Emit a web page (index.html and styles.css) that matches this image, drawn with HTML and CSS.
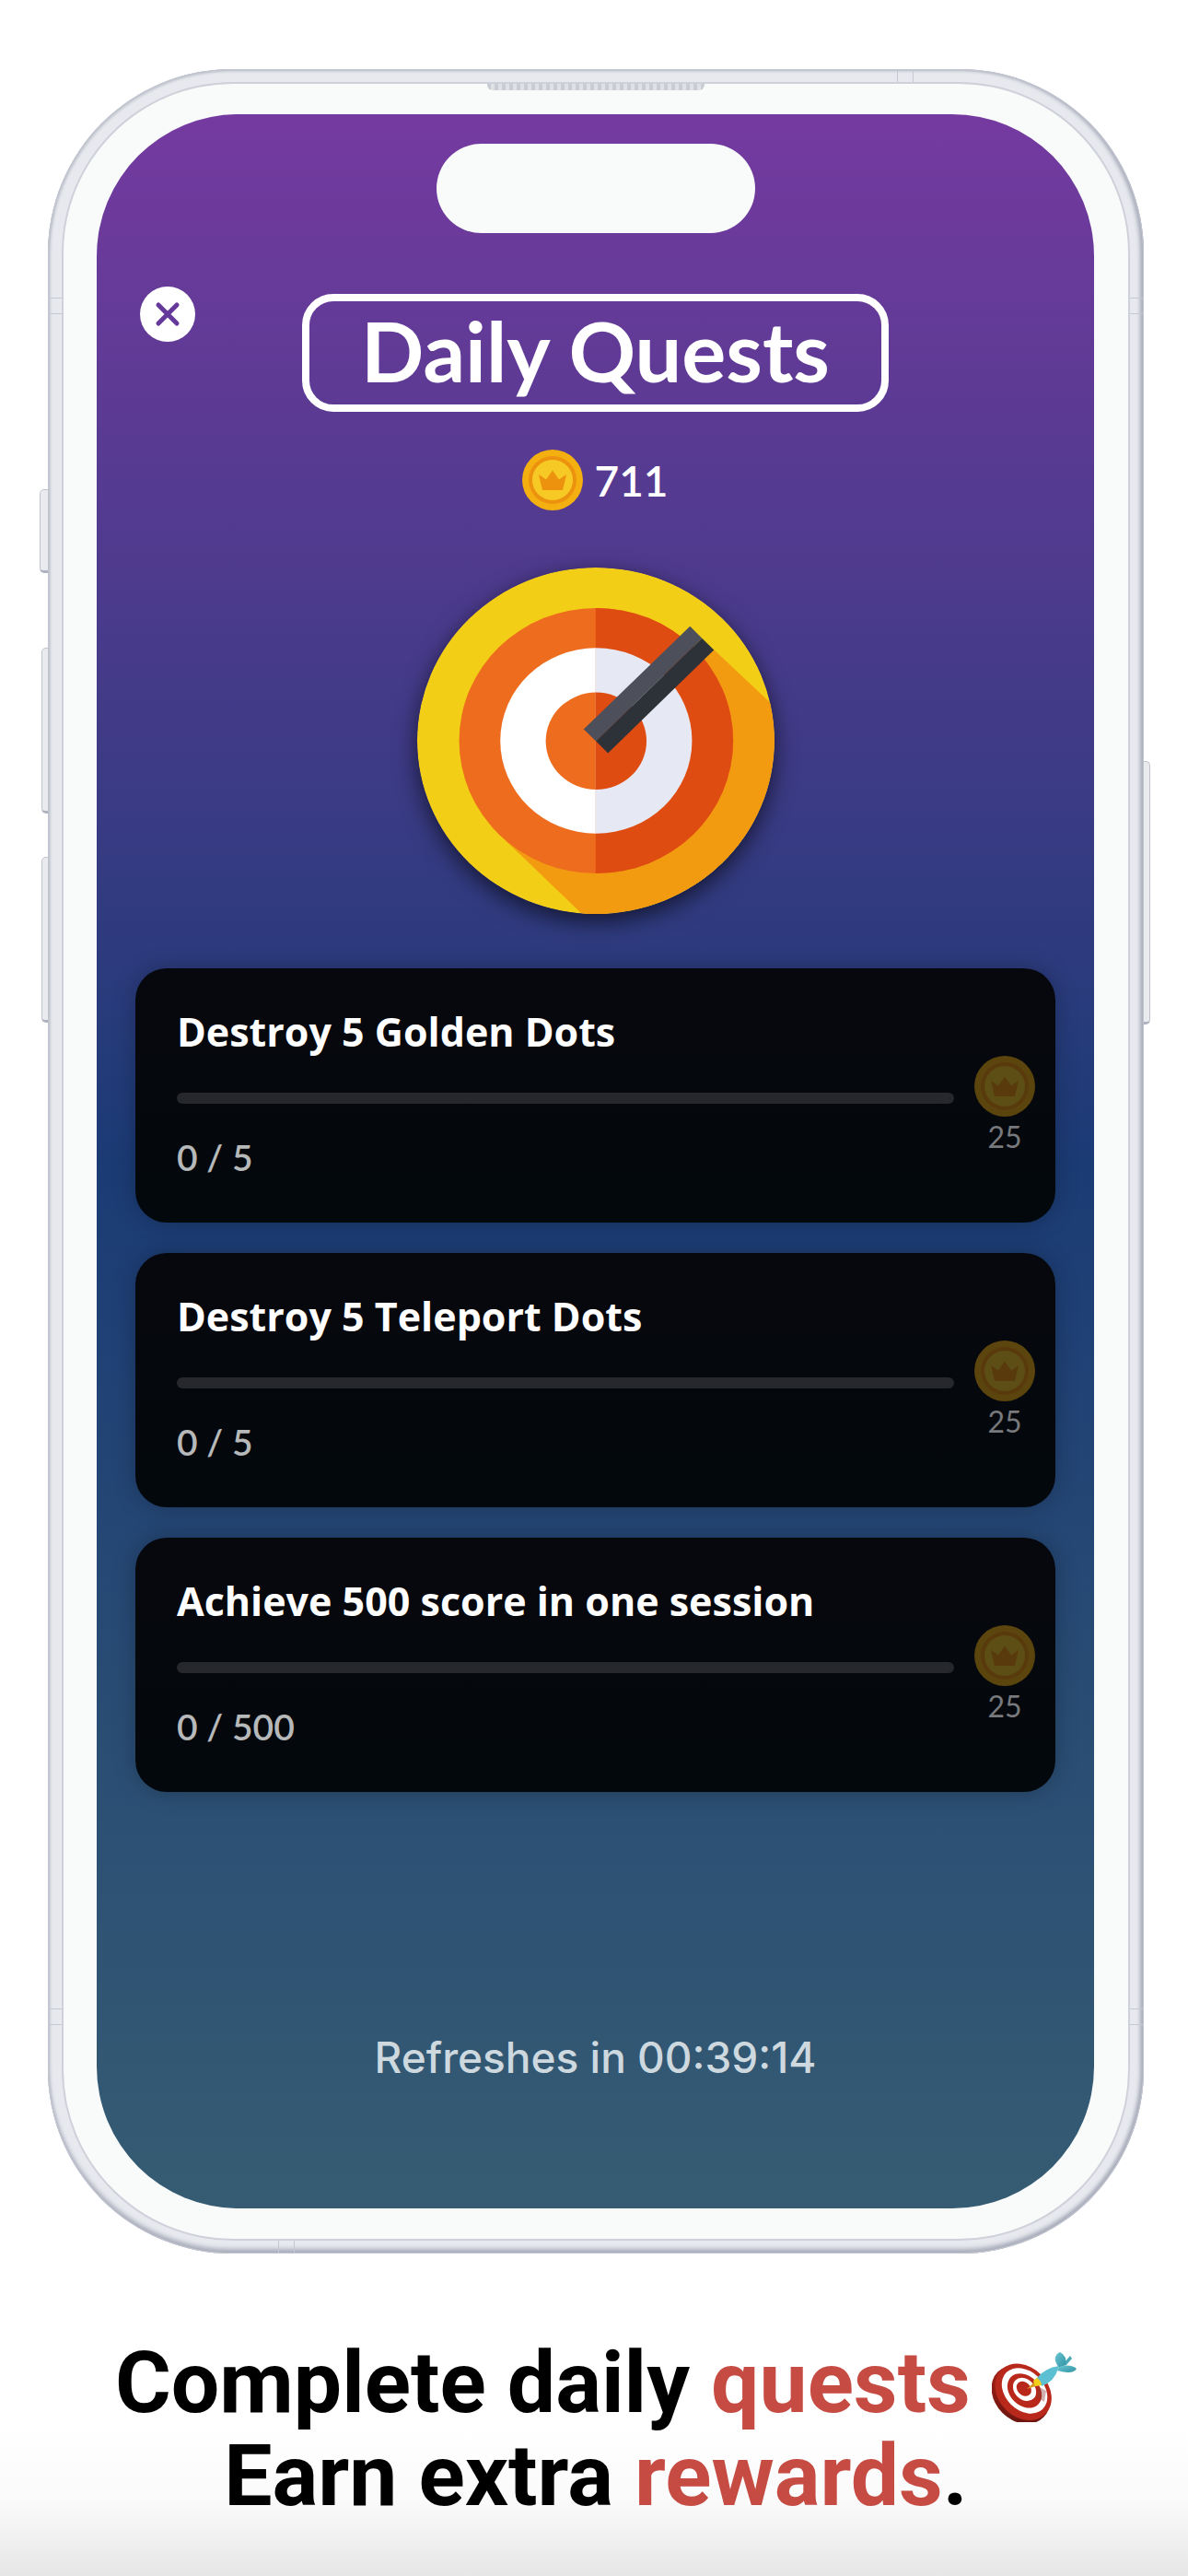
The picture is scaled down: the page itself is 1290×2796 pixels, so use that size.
FILE: index.html
```html
<!DOCTYPE html>
<html lang="en">
<head>
<meta charset="utf-8">
<meta name="viewport" content="width=device-width, initial-scale=1">
<title>Daily Quests</title>
<link rel="stylesheet" href="styles.css">
</head>
<body>
<svg width="0" height="0" class="defs" aria-hidden="true">
  <symbol id="coin" viewBox="0 0 66 66">
    <circle cx="33" cy="33" r="33" fill="#f4b010"/>
    <circle cx="33" cy="33" r="26" fill="#ec920f"/>
    <circle cx="33" cy="33" r="22" fill="#f6c924"/>
    <path d="M18 27l8 5.500 7-10 7 10 8-5.500-4 17H22z" fill="#ec920f"/>
  </symbol>
</svg>
<main class="page">
  <section class="phone">
    <span class="key key-action"></span>
    <span class="key key-up"></span>
    <span class="key key-down"></span>
    <span class="key key-power"></span>
    <span class="band band-top"></span>
    <span class="band band-bottom"></span>
    <span class="band band-left"></span>
    <span class="band band-right"></span>
    <span class="band band-left band-low"></span>
    <span class="band band-right band-low"></span>
    <div class="bezel">
      <span class="speaker"></span>
      <div class="screen">
        <div class="island"></div>
        <header class="header">
          <button class="close" type="button" aria-label="Close">
            <svg viewBox="0 0 60 60"><path d="M20 20l20 20M40 20L20 40"/></svg>
          </button>
          <h1 class="title">Daily Quests</h1>
        </header>
        <div class="balance">
          <svg class="coin"><use href="#coin"/></svg>
          <span>711</span>
        </div>
        <svg class="target" viewBox="160 108 1163 1127" aria-hidden="true">
          <defs>
            <clipPath id="disc"><ellipse cx="741.500" cy="671.500" rx="581.500" ry="563.500"/></clipPath>
            <clipPath id="right"><path d="M741 100h600v1150H741z"/></clipPath>
          </defs>
          <ellipse cx="741.500" cy="671.500" rx="581.500" ry="563.500" fill="#f3ce16"/>
          <path clip-path="url(#disc)" fill="#f29a10" d="M1125 375L1420 652V1340H806L400 950z"/>
          <g fill="#ee6c1e">
            <ellipse cx="742.500" cy="671.500" rx="446" ry="432"/>
            <ellipse cx="742.500" cy="671.500" rx="312" ry="302" fill="#fff"/>
            <ellipse cx="742.500" cy="672.500" rx="164" ry="158"/>
          </g>
          <g fill="#df4c12" clip-path="url(#right)">
            <ellipse cx="742.500" cy="671.500" rx="446" ry="432"/>
            <ellipse cx="742.500" cy="671.500" rx="312" ry="302" fill="#e6e9f3"/>
            <ellipse cx="742.500" cy="672.500" rx="164" ry="158"/>
          </g>
          <path fill="#4d4f5b" d="M702 634L1048 299l39 39L742 673z"/>
          <path fill="#2d3138" d="M742 673l345-335 39 38L781 712z"/>
        </svg>
        <ul class="quests">
          <li class="quest">
            <div class="quest-main">
              <h2 class="quest-title" id="q1">Destroy 5 Golden Dots</h2>
              <progress class="bar" value="0" max="5" aria-labelledby="q1"></progress>
              <p class="count">0 / 5</p>
            </div>
            <div class="reward"><svg class="coin"><use href="#coin"/></svg><span>25</span></div>
          </li>
          <li class="quest">
            <div class="quest-main">
              <h2 class="quest-title" id="q2">Destroy 5 Teleport Dots</h2>
              <progress class="bar" value="0" max="5" aria-labelledby="q2"></progress>
              <p class="count">0 / 5</p>
            </div>
            <div class="reward"><svg class="coin"><use href="#coin"/></svg><span>25</span></div>
          </li>
          <li class="quest">
            <div class="quest-main">
              <h2 class="quest-title" id="q3">Achieve 500 score in one session</h2>
              <progress class="bar" value="0" max="500" aria-labelledby="q3"></progress>
              <p class="count">0 / 500</p>
            </div>
            <div class="reward"><svg class="coin"><use href="#coin"/></svg><span>25</span></div>
          </li>
        </ul>
        <p class="refresh">Refreshes in 00:39:14</p>
      </div>
    </div>
  </section>
  <p class="caption">
    Complete daily <em>quests</em>
    <svg class="dart" viewBox="0 0 92 76" role="img" aria-label="Bullseye">
      <defs>
        <linearGradient id="fin" x1="0" y1="0" x2="1" y2="1"><stop offset="0" stop-color="#6cc6d4"/><stop offset="1" stop-color="#2f93a3"/></linearGradient>
        <linearGradient id="side" x1="0" y1="0" x2="1" y2="1"><stop offset="0" stop-color="#b5261a"/><stop offset="1" stop-color="#5f120e"/></linearGradient>
      </defs>
      <g transform="rotate(45 32 44)">
        <ellipse cx="33" cy="46" rx="35" ry="28" fill="url(#side)"/>
        <ellipse cx="33" cy="42" rx="34" ry="27" fill="#b8281b"/>
        <ellipse cx="33" cy="40" rx="28" ry="21" fill="#fff"/>
        <ellipse cx="33" cy="40" rx="21" ry="16" fill="#b8281b"/>
        <ellipse cx="32" cy="39" rx="14" ry="11" fill="#fff"/>
        <ellipse cx="31" cy="39" rx="9" ry="7" fill="#b8281b"/>
      </g>
      <path d="M50 37l9 5-2 12-8-5z" fill="#8a3c38" opacity=".4"/>
      <path d="M38 40l12-11 4 6z" fill="#d79a1c"/>
      <path d="M45 31l5-4q6 3 4 9l-7 1z" fill="#f2cf1d"/>
      <path d="M49 28Q58 17 73 15L72 18Q68 32 54 37Q54 31 49 28z" fill="#5cc0d2"/>
      <path d="M78 12l7-8 2 3-7 8z" fill="#4aa9b8"/>
      <path d="M73 17Q64 5 74 0Q82 4 80 14z" fill="url(#fin)"/>
      <path d="M73 16Q86 12 92 18Q88 25 71 20z" fill="url(#fin)"/>
    </svg><br>
    Earn extra <em>rewards</em>.
  </p>
</main>
</body>
</html>
```
FILE: styles.css
```css
* { box-sizing: border-box; }

body {
  margin: 0;
  min-height: 100vh;
  background: #fff linear-gradient(#fff, #fafafa 50%, #e6e6e6) bottom / 100% 160px no-repeat;
  color: #000;
}

h1, h2, p, ul { margin: 0; padding: 0; }
.defs { position: absolute; }

.page { padding: 75px 48px 57px 52px; }

.phone {
  position: relative;
  padding: 16px 17px;
  border-radius: 200px;
  background: #e7e9ee;
  box-shadow:
    inset 0 0 0 1px #c4c7d1,
    inset 0 -5px 5px #a9adbb,
    inset -4px 0 4px #a9adbb,
    inset 2px 2px 3px #bfc3cc;
}

.bezel {
  position: relative;
  padding: 33px 37px 33px 36px;
  border-radius: 184px;
  background: #f9fbfa;
  box-shadow: 0 0 0 2px #cfd1da;
}

.screen {
  display: flex;
  flex-direction: column;
  align-items: center;
  padding: 32px 42px 136px;
  border-radius: 154px;
  background: linear-gradient(#753aa0, #1b3b75 50%, #365c73);
  font-family: Lato, "Liberation Sans", sans-serif;
  color: #fff;
}

.key {
  position: absolute;
  left: -7px;
  width: 8px;
  height: 180px;
  border: 1px solid #c1c4cd;
  border-bottom: 3px solid #aeb2be;
  border-radius: 5px 0 0 5px;
  background: #e9ebef;
}
.key-action { top: 456px; left: -9px; width: 10px; height: 91px; }
.key-up { top: 628px; }
.key-down { top: 855px; }
.key-power { top: 751px; left: auto; right: -7px; height: 286px; border-radius: 0 5px 5px 0; }

.band { position: absolute; border: 0 solid #c6c9d2; }
.band-top, .band-bottom { width: 18px; height: 15px; border-width: 0 1px; }
.band-top { top: 1px; right: 250px; }
.band-bottom { bottom: 1px; left: 250px; }
.band-left, .band-right { top: 248px; width: 16px; height: 18px; border-width: 1px 0; }
.band-left { left: 0; }
.band-right { right: 0; }
.band-low { top: auto; bottom: 248px; }

.speaker {
  position: absolute;
  top: 0;
  left: 50%;
  width: 236px;
  height: 7px;
  margin-left: -118px;
  border-radius: 0 0 6px 6px;
  background: repeating-linear-gradient(90deg, #c9ccd3 0 4px, #dfe1e5 4px 8px);
}

.island {
  width: 346px;
  height: 97px;
  border-radius: 49px;
  background: #f9fbfa;
}

.header {
  align-self: stretch;
  display: grid;
  grid-template-columns: 1fr auto 1fr;
  align-items: start;
  margin-top: 58px;
  padding: 0 5px;
}

.close {
  width: 60px;
  height: 60px;
  padding: 0;
  border: 0;
  border-radius: 50%;
  background: #fff;
}
.close svg { display: block; width: 60px; height: 60px; }
.close path { fill: none; stroke: #65399a; stroke-width: 5; stroke-linecap: round; }

.title {
  margin-top: 8px;
  padding: 0 56px 6px;
  border: 8px solid #fff;
  border-radius: 34px;
  font-size: 90px;
  font-weight: 700;
  line-height: 106px;
}

.coin { display: block; width: 66px; height: 66px; }

.balance {
  display: flex;
  align-items: center;
  gap: 12px;
  margin-top: 41px;
  font-size: 46px;
  font-weight: 600;
}

.target {
  display: block;
  width: 388px;
  height: 376px;
  margin-top: 62px;
  border-radius: 50%;
  box-shadow: 0 8px 24px rgba(0, 0, 0, .6);
}

.quests {
  align-self: stretch;
  display: grid;
  gap: 33px;
  margin-top: 59px;
  list-style: none;
}

.quest {
  display: flex;
  gap: 22px;
  padding: 44px 22px 48px 45px;
  border-radius: 34px;
  background: linear-gradient(#07080d, #03080c);
  box-shadow: 0 0 24px rgba(0, 0, 0, .25);
}

.quest-main { flex: 1; display: flex; flex-direction: column; }
.quest-title {
  font-family: "Open Sans", "Noto Sans", sans-serif;
  font-size: 43px;
  font-weight: 700;
  line-height: 50px;
}

.bar {
  appearance: none;
  width: 100%;
  height: 12px;
  margin: 41px 0 35px;
  border: 0;
  border-radius: 6px;
  background: #27282d;
  overflow: hidden;
}
.bar::-webkit-progress-bar { background: #27282d; }
.bar::-webkit-progress-value { background: #f4b010; }

.count { color: #b6b8ba; font-size: 39px; font-weight: 600; line-height: 46px; }

.reward {
  display: flex;
  flex-direction: column;
  align-items: center;
  gap: 2px;
  padding-top: 51px;
  color: #77797c;
  font-size: 32px;
  line-height: 40px;
}
.reward .coin { opacity: .36; }

.refresh {
  margin-top: 260px;
  color: #cdd8df;
  font-family: Inter, "Liberation Sans", sans-serif;
  font-size: 46px;
  font-weight: 500;
  line-height: 56px;
}

.caption {
  margin-top: 90px;
  font-family: Roboto, "Liberation Sans", sans-serif;
  font-size: 93px;
  font-weight: 700;
  line-height: 101px;
  text-align: center;
}
.caption em { color: #c64b43; font-style: normal; }
.dart { width: 92px; height: 76px; vertical-align: -11px; }
```
